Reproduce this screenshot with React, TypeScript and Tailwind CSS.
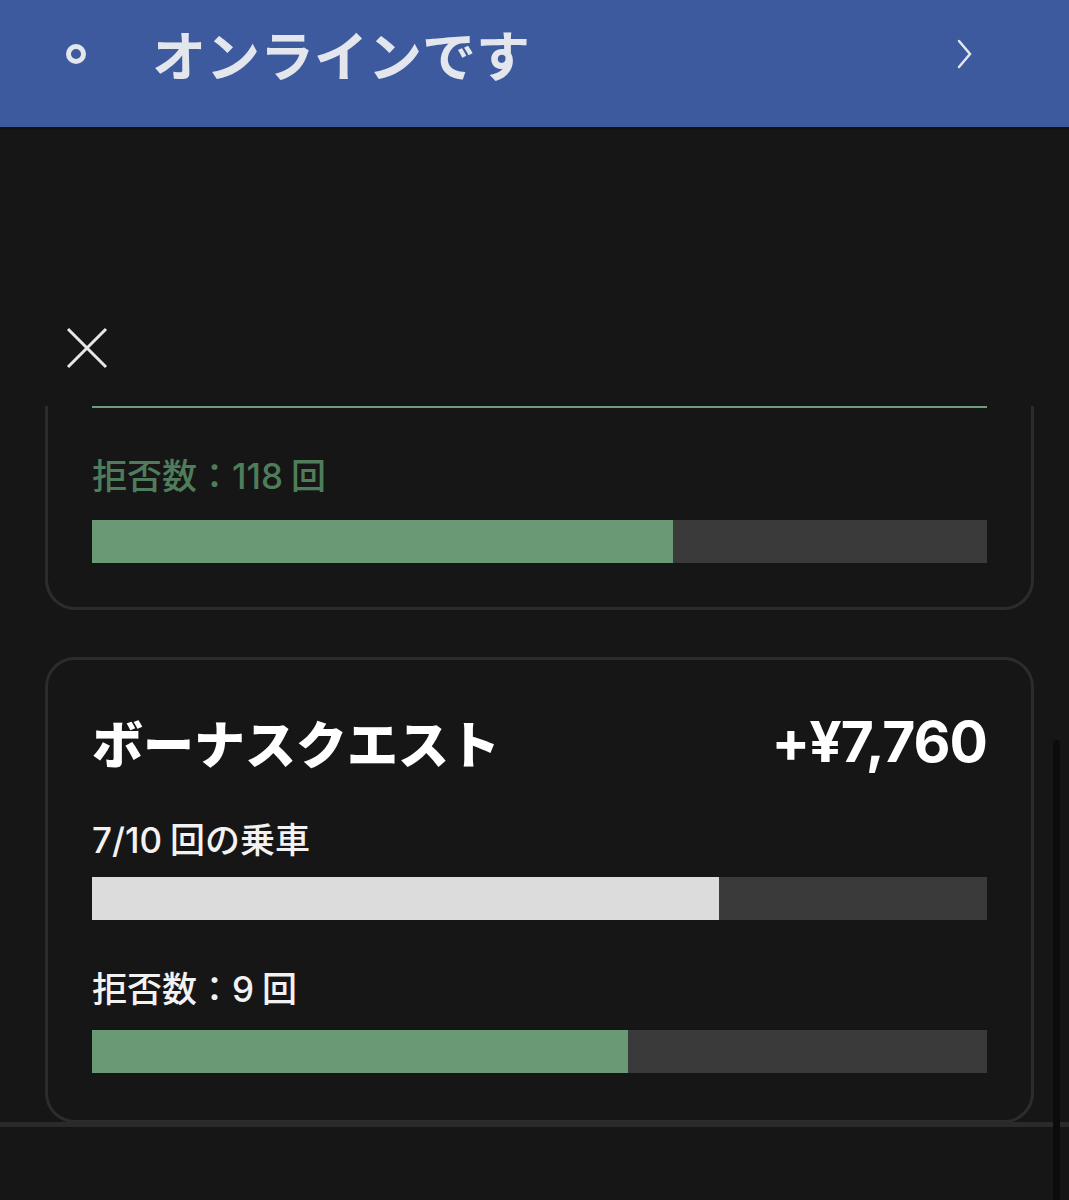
import React from "react";

const font = { fontFamily: '"Noto Sans CJK JP", "Noto Sans", sans-serif' };
const latin = { fontFamily: 'Inter, "Noto Sans CJK JP", sans-serif' };

function Bar({ pct, fill }: { pct: number; fill: string }) {
  return (
    <div className="h-[43px] w-full bg-[#3a3a3a]">
      <div className={`h-full ${fill}`} style={{ width: `${pct}%` }} />
    </div>
  );
}

export default function App() {
  return (
    <div
      className="relative h-[1200px] w-full overflow-hidden bg-[#161616]"
      style={font}
    >
      {/* status header */}
      <div className="flex h-[130px] items-center border-b-[3px] border-[#0f1116] bg-[#3d5a9e] pb-[20px] pl-[66px] pr-[96px]">
        <div className="h-[20px] w-[20px] rounded-full border-[5px] border-[#e4e6ee]" />
        <div className="ml-[66px] text-[54px] font-bold leading-none text-[#e4e6ee]">
          オンラインです
        </div>
        <svg className="ml-auto" width="16" height="30" viewBox="0 0 16 30" fill="none">
          <path d="M2 2 L13 15 L2 28" stroke="#e4e6ee" strokeWidth="2.5" strokeLinecap="round" />
        </svg>
      </div>

      {/* close */}
      <div className="pl-[66px] pt-[197px]">
        <svg width="42" height="42" viewBox="0 0 42 42" fill="none">
          <path d="M2 2 L40 40 M40 2 L2 40" stroke="#e8e8e8" strokeWidth="3" />
        </svg>
      </div>

      {/* scrolling quest list */}
      <div className="mt-[37px] h-[716px] overflow-hidden pl-[45px] pr-[35px]">
        <div className="rounded-b-[30px] border-x-[3px] border-b-[3px] border-[#2c2c2c] px-[44px] pb-[44px]">
          <div className="h-[2px] bg-[#6f9c78]" />
          <div className="mt-[44px] text-[35px] font-medium leading-[44px] text-[#4f7d5b]">
            拒否数：<span style={latin}>118</span> 回
          </div>
          <div className="mt-[22px]">
            <Bar pct={64.9} fill="bg-[#6a9a75]" />
          </div>
        </div>

        <div className="mt-[47px] rounded-[30px] border-[3px] border-[#2c2c2c] px-[44px] pb-[47px] pt-[50px]">
          <div className="flex items-center justify-between">
            <div className="text-[51px] font-black leading-[64px] text-white">
              ボーナスクエスト
            </div>
            <div className="text-[57px] font-bold leading-[64px] tracking-[-1px] text-white" style={latin}>
              +¥7,760
            </div>
          </div>
          <div className="mt-[42px] text-[35px] font-medium leading-[44px] text-[#f2f2f2]">
            <span style={latin}>7/10</span> 回の乗車
          </div>
          <div className="mt-[15px]">
            <Bar pct={70} fill="bg-[#dcdcdc]" />
          </div>
          <div className="mt-[45px] text-[35px] font-medium leading-[44px] text-[#f2f2f2]">
            拒否数：<span style={latin}>9</span> 回
          </div>
          <div className="mt-[19px]">
            <Bar pct={59.9} fill="bg-[#6a9a75]" />
          </div>
        </div>
      </div>

      <div className="border-t-[5px] border-[#2a2a2a]" />

      {/* scrollbar */}
      <div className="absolute right-[9px] top-[740px] h-[470px] w-[7px] rounded-full bg-[#0c0c0c]" />
    </div>
  );
}
